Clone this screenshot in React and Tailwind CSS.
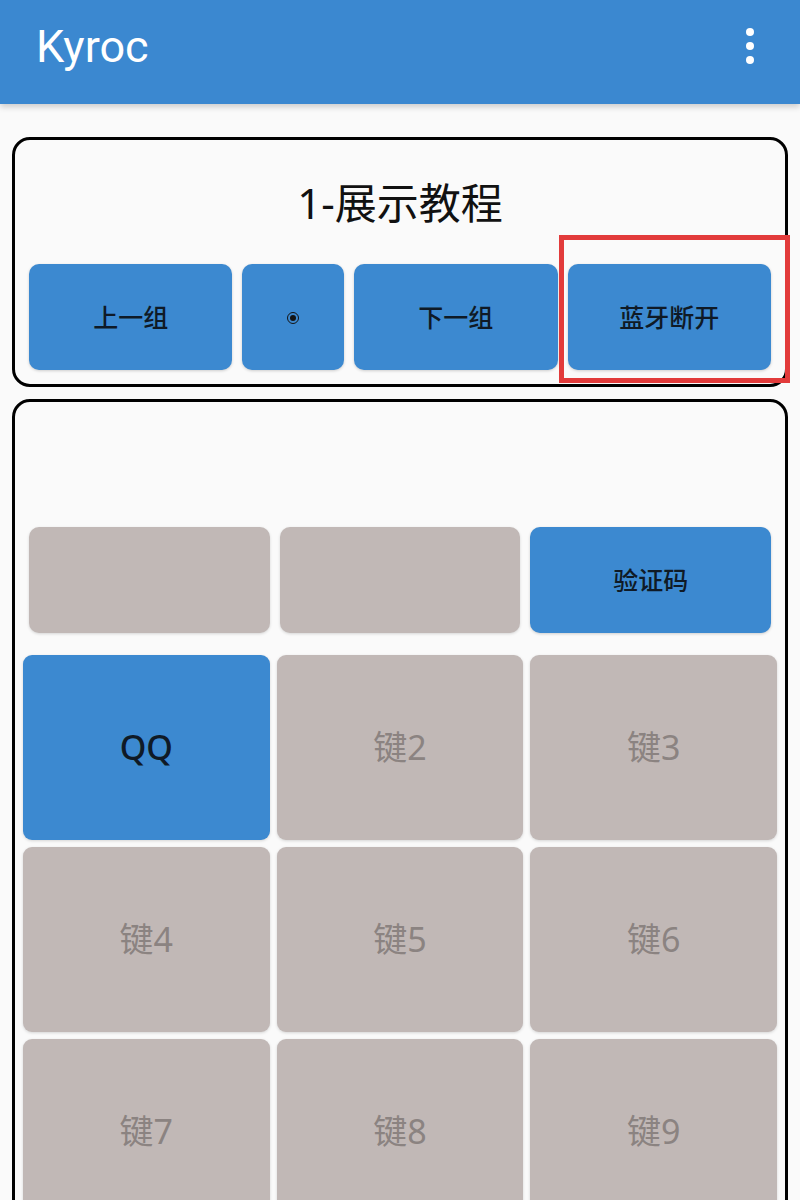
const font = { fontFamily: "'Noto Sans', 'Noto Sans CJK SC', sans-serif" };

function BlueButton({ children, className = "" }) {
  return (
    <button
      type="button"
      className={`flex items-center justify-center rounded-[10px] bg-[#3c89d0] pt-[2px] text-[25px] font-medium text-[#0f1a26] shadow-[0_1px_3px_rgba(0,0,0,0.18)] ${className}`}
    >
      {children}
    </button>
  );
}

function Key({ label, active }) {
  return (
    <div
      className={`flex h-[185px] items-center justify-center rounded-[9px] text-[34px] shadow-[0_1px_3px_rgba(0,0,0,0.15)] ${
        active ? "bg-[#3c89d0] font-medium text-[#0f1a26]" : "bg-[#c1b8b6] text-[#8b8381]"
      }`}
    >
      {label}
    </div>
  );
}

export default function App() {
  const keys = ["QQ", "键2", "键3", "键4", "键5", "键6", "键7", "键8", "键9"];

  return (
    <div className="h-[1200px] overflow-hidden bg-[#fafafa]" style={font}>
      <header className="relative z-10 flex h-[104px] items-center justify-between bg-[#3b88d0] pb-[12px] pl-[36px] pr-[46px] shadow-[0_3px_6px_rgba(0,0,0,0.18)]">
        <h1 className="font-[Roboto] text-[45px] leading-none text-white">Kyroc</h1>
        <div className="flex flex-col gap-[6px]">
          <span className="h-[8px] w-[8px] rounded-full bg-white" />
          <span className="h-[8px] w-[8px] rounded-full bg-white" />
          <span className="h-[8px] w-[8px] rounded-full bg-white" />
        </div>
      </header>

      <main className="px-[12px] pt-[33px]">
        <section className="relative flex h-[250px] flex-col rounded-[18px] border-[3px] border-black px-[14px] pb-[14px]">
          <div className="flex flex-1 items-center justify-center text-[42px] text-[#111]">
            1-展示教程
          </div>
          <div className="flex h-[106px] gap-[10px]">
            <BlueButton className="flex-[2]">上一组</BlueButton>
            <BlueButton className="flex-1">
              <span className="flex h-[12px] w-[12px] items-center justify-center rounded-full border-[1.5px] border-[#141414]">
                <span className="h-[6px] w-[6px] rounded-full bg-[#141414]" />
              </span>
            </BlueButton>
            <BlueButton className="flex-[2]">下一组</BlueButton>
            <BlueButton className="flex-[2]">蓝牙断开</BlueButton>
          </div>
          {/* highlight frame round the bluetooth button */}
          <div className="pointer-events-none absolute left-[544px] top-[95px] h-[148px] w-[231px] border-[5px] border-[#e23b3b]" />
        </section>

        <section className="mt-[12px] h-[900px] rounded-[18px] border-[3px] border-black pt-[125px]">
          <div className="flex h-[106px] gap-[10px] px-[14px]">
            <div className="flex-1 rounded-[10px] bg-[#c1b8b6] shadow-[0_1px_3px_rgba(0,0,0,0.15)]" />
            <div className="flex-1 rounded-[10px] bg-[#c1b8b6] shadow-[0_1px_3px_rgba(0,0,0,0.15)]" />
            <BlueButton className="flex-1">验证码</BlueButton>
          </div>
          <div className="mt-[22px] grid grid-cols-3 gap-[7px] px-[8px]">
            {keys.map((k, i) => (
              <Key key={k} label={k} active={i === 0} />
            ))}
          </div>
        </section>
      </main>
    </div>
  );
}
